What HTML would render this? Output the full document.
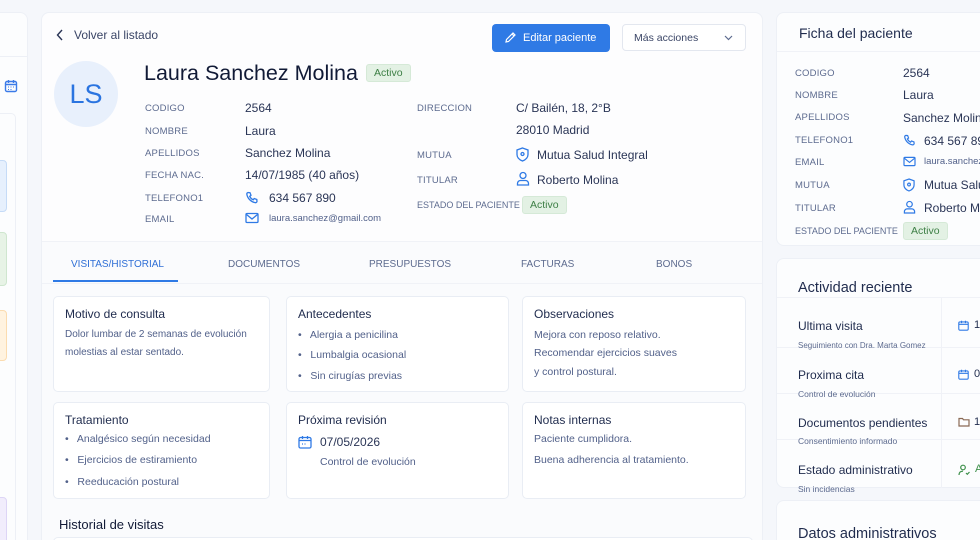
<!DOCTYPE html>
<html><head><meta charset="utf-8"><style>
*{box-sizing:border-box;margin:0;padding:0}
html,body{width:980px;height:540px;overflow:hidden}
body{background:#f5f7fb;font-family:"Liberation Sans",sans-serif;color:#1f2b4d}
#w{position:relative;width:980px;height:540px;overflow:hidden}
#w div{white-space:nowrap}
.abs{position:absolute}
.panel{position:absolute;background:#fcfdfe;border:1px solid #edf0f6;border-radius:8px}
.lbl{position:absolute;font-size:9.5px;color:#5d6b8f;letter-spacing:.2px}
.val{position:absolute;font-size:12px;color:#2a3556}
.badge{position:absolute;background:#e3f1e4;color:#3d7f45;font-size:10.5px;border-radius:3px;padding:2px 7px;border:1px solid #d5e9d7}
.card{position:absolute;background:#fff;border:1px solid #e9edf4;border-radius:5px}
.card h4{position:absolute;left:11px;top:10px;font-size:12px;font-weight:normal;color:#1f2b4d}
.card p{position:absolute;font-size:10.5px;color:#52618a;white-space:nowrap}
.tab{position:absolute;top:259px;font-size:10px;color:#5d6b8f}
svg{position:absolute}
</style></head><body><div id="w">
<div class="panel" style="left:-10px;top:12px;width:38px;height:540px"></div>
<div class="abs" style="left:0;top:56px;width:28px;height:1px;background:#edf0f6"></div>
<svg style="left:4px;top:79px" width="14" height="14" viewBox="0 0 14 14" fill="none" stroke="#3b7be8" stroke-width="1.4"><rect x="1.5" y="2.5" width="11" height="10" rx="1.5"/><path d="M1.5 5.5h11M4.5 1v3M9.5 1v3"/><path d="M4 8h1M6.5 8h1M9 8h1M4 10.5h1M6.5 10.5h1" stroke-width="1"/></svg>
<div class="abs" style="left:-6px;top:113px;width:22px;height:440px;border:1px solid #edf0f6;border-radius:5px;background:#fcfdfe"></div>
<div class="abs" style="left:-6px;top:160px;width:13px;height:52px;background:#e6f0fd;border:1px solid #c5dbf7;border-radius:4px"></div>
<div class="abs" style="left:-6px;top:232px;width:13px;height:54px;background:#e7f3e6;border:1px solid #cfe6cf;border-radius:4px"></div>
<div class="abs" style="left:-6px;top:310px;width:13px;height:51px;background:#fff3e0;border:1px solid #fbdcb0;border-radius:4px"></div>
<div class="abs" style="left:-6px;top:497px;width:13px;height:60px;background:#f1edfc;border:1px solid #ddd5f6;border-radius:4px"></div>

<div class="panel" style="left:41px;top:12px;width:722px;height:540px;background:#fafbfd"></div>
<div class="abs" style="left:42px;top:13px;width:720px;height:228px;background:#fdfdfe;border-radius:8px 8px 0 0"></div>
<div class="abs" style="left:42px;top:241px;width:720px;height:1px;background:#f0f2f7"></div>
<svg style="left:56px;top:29px" width="8" height="12" viewBox="0 0 8 12" fill="none" stroke="#2a3556" stroke-width="1.4"><path d="M6 1L1.5 6L6 11"/></svg>
<div class="abs" style="left:74px;top:28px;font-size:12px;color:#3a4566">Volver al listado</div>
<div class="abs" style="left:492px;top:24px;width:118px;height:28px;background:#2f7ae5;border-radius:4px;color:#fff;font-size:11px;line-height:28px;padding-left:31px">Editar paciente</div>
<svg style="left:504px;top:31px" width="13" height="13" viewBox="0 0 13 13" fill="none" stroke="#fff" stroke-width="1.2"><path d="M2 11l.5-2.5L9 2l2 2-6.5 6.5z M8 3l2 2"/></svg>
<div class="abs" style="left:622px;top:24px;width:124px;height:27px;background:#fff;border:1px solid #e3e7ef;border-radius:4px;font-size:10.5px;color:#3a4566;line-height:26px;padding-left:11px">Más acciones</div>
<svg style="left:724px;top:35px" width="9" height="6" viewBox="0 0 9 6" fill="none" stroke="#5d6b8f" stroke-width="1.2"><path d="M1 1l3.5 3.5L8 1"/></svg>

<div class="abs" style="left:54px;top:61px;width:64px;height:66px;border-radius:50%;background:#e8f0fc;color:#2a74e0;font-size:27px;text-align:center;line-height:66px">LS</div>
<div class="abs" style="left:144px;top:61px;font-size:21.5px;color:#111a36">Laura Sanchez Molina</div>
<div class="badge" style="left:366px;top:64px">Activo</div>

<div class="lbl" style="left:145px;top:103px">CODIGO</div><div class="val" style="left:245px;top:101px">2564</div>
<div class="lbl" style="left:145px;top:126px">NOMBRE</div><div class="val" style="left:245px;top:124px">Laura</div>
<div class="lbl" style="left:145px;top:148px">APELLIDOS</div><div class="val" style="left:245px;top:146px">Sanchez Molina</div>
<div class="lbl" style="left:145px;top:170px">FECHA NAC.</div><div class="val" style="left:245px;top:168px">14/07/1985 (40 años)</div>
<div class="lbl" style="left:145px;top:193px">TELEFONO1</div><div class="val" style="left:269px;top:191px">634 567 890</div>
<svg style="left:245px;top:191px" width="14" height="14" viewBox="0 0 14 14" fill="none" stroke="#2f7ae5" stroke-width="1.3"><path d="M3 1.5l2 .2 1 2.6-1.3 1a7 7 0 0 0 3.5 3.5l1-1.3 2.6 1 .2 2c-.2.7-.9 1.2-1.6 1.2A10.5 10.5 0 0 1 1.8 3.1C1.8 2.4 2.3 1.7 3 1.5z"/></svg>
<div class="lbl" style="left:145px;top:214px">EMAIL</div><div class="val" style="left:269px;top:213px;font-size:9.5px;color:#52618a">laura.sanchez@gmail.com</div>
<svg style="left:245px;top:212px" width="14" height="12" viewBox="0 0 14 12" fill="none" stroke="#2f7ae5" stroke-width="1.3"><rect x="1" y="1.5" width="12" height="9" rx="1"/><path d="M1.5 2.5L7 7l5.5-4.5"/></svg>

<div class="lbl" style="left:417px;top:103px">DIRECCION</div><div class="val" style="left:516px;top:101px">C/ Bailén, 18, 2°B</div>
<div class="val" style="left:516px;top:123px">28010 Madrid</div>
<div class="lbl" style="left:417px;top:150px">MUTUA</div><div class="val" style="left:537px;top:148px">Mutua Salud Integral</div>
<svg style="left:516px;top:147px" width="13" height="15" viewBox="0 0 13 15" fill="none" stroke="#2f7ae5" stroke-width="1.3"><path d="M6.5 1L12 3v4.5c0 3-2.5 5.3-5.5 6.5C3.5 12.8 1 10.5 1 7.5V3z"/><circle cx="6.5" cy="7" r="1.5"/></svg>
<div class="lbl" style="left:417px;top:175px">TITULAR</div><div class="val" style="left:537px;top:173px">Roberto Molina</div>
<svg style="left:516px;top:171px" width="14" height="15" viewBox="0 0 14 15" fill="none" stroke="#2f7ae5" stroke-width="1.3"><circle cx="7" cy="4.5" r="3"/><path d="M1.5 14v-1.5a3 3 0 0 1 3-3h5a3 3 0 0 1 3 3V14z"/></svg>
<div class="lbl" style="left:417px;top:200px;font-size:9px;letter-spacing:0">ESTADO DEL PACIENTE</div>
<div class="badge" style="left:522px;top:196px">Activo</div>

<div class="abs" style="left:42px;top:283px;width:720px;height:1px;background:#f0f2f7"></div>
<div class="tab" style="left:71px;color:#2f6fd6">VISITAS/HISTORIAL</div>
<div class="abs" style="left:53px;top:280px;width:125px;height:2px;background:#2f7ae5"></div>
<div class="tab" style="left:228px">DOCUMENTOS</div>
<div class="tab" style="left:369px">PRESUPUESTOS</div>
<div class="tab" style="left:521px">FACTURAS</div>
<div class="tab" style="left:656px">BONOS</div>

<div class="card" style="left:53px;top:296px;width:217px;height:96px"><h4>Motivo de consulta</h4><p style="left:11px;top:32px;font-size:10px">Dolor lumbar de 2 semanas de evolución</p><p style="left:11px;top:50px;font-size:10px">molestias al estar sentado.</p></div>
<div class="card" style="left:286px;top:296px;width:223px;height:96px"><h4>Antecedentes</h4><p style="left:11px;top:32px">•&nbsp;&nbsp; Alergia a penicilina</p><p style="left:11px;top:52px">•&nbsp;&nbsp; Lumbalgia ocasional</p><p style="left:11px;top:73px">•&nbsp;&nbsp; Sin cirugías previas</p></div>
<div class="card" style="left:522px;top:296px;width:224px;height:96px"><h4>Observaciones</h4><p style="left:11px;top:32px">Mejora con reposo relativo.</p><p style="left:11px;top:50px">Recomendar ejercicios suaves</p><p style="left:11px;top:69px">y control postural.</p></div>
<div class="card" style="left:53px;top:402px;width:217px;height:97px"><h4>Tratamiento</h4><p style="left:11px;top:30px">•&nbsp;&nbsp; Analgésico según necesidad</p><p style="left:11px;top:51px">•&nbsp;&nbsp; Ejercicios de estiramiento</p><p style="left:11px;top:73px">•&nbsp;&nbsp; Reeducación postural</p></div>
<div class="card" style="left:286px;top:402px;width:223px;height:97px"><h4>Próxima revisión</h4><p style="left:33px;top:32px;font-size:12px;color:#2a3556">07/05/2026</p><p style="left:33px;top:53px">Control de evolución</p></div>
<svg style="left:298px;top:435px" width="14" height="14" viewBox="0 0 14 14" fill="none" stroke="#2f7ae5" stroke-width="1.3"><rect x="1" y="2.5" width="12" height="10.5" rx="1.5"/><path d="M1 5.5h12M4.5 1v3M9.5 1v3M4 9h1M6.5 9h1"/></svg>
<div class="card" style="left:522px;top:402px;width:224px;height:97px"><h4>Notas internas</h4><p style="left:11px;top:30px">Paciente cumplidora.</p><p style="left:11px;top:51px">Buena adherencia al tratamiento.</p></div>
<div class="abs" style="left:59px;top:517px;font-size:13px;color:#111a36">Historial de visitas</div>
<div class="abs" style="left:53px;top:537px;width:700px;height:10px;border:1px solid #e9edf4;border-radius:5px;background:#fff"></div>

<div class="panel" style="left:776px;top:12px;width:230px;height:234px"></div>
<div class="abs" style="left:777px;top:51px;width:203px;height:1px;background:#f0f2f7"></div>
<div class="abs" style="left:799px;top:25px;font-size:14px;color:#1f2b4d">Ficha del paciente</div>
<div class="lbl" style="left:795px;top:68px">CODIGO</div><div class="val" style="left:903px;top:66px">2564</div>
<div class="lbl" style="left:795px;top:90px">NOMBRE</div><div class="val" style="left:903px;top:88px">Laura</div>
<div class="lbl" style="left:795px;top:112px">APELLIDOS</div><div class="val" style="left:903px;top:111px">Sanchez Molina</div>
<div class="lbl" style="left:795px;top:135px">TELEFONO1</div><div class="val" style="left:924px;top:134px">634 567 890</div>
<svg style="left:903px;top:134px" width="13" height="13" viewBox="0 0 14 14" fill="none" stroke="#2f7ae5" stroke-width="1.3"><path d="M3 1.5l2 .2 1 2.6-1.3 1a7 7 0 0 0 3.5 3.5l1-1.3 2.6 1 .2 2c-.2.7-.9 1.2-1.6 1.2A10.5 10.5 0 0 1 1.8 3.1C1.8 2.4 2.3 1.7 3 1.5z"/></svg>
<div class="lbl" style="left:795px;top:157px">EMAIL</div><div class="val" style="left:924px;top:156px;font-size:9.5px;color:#52618a">laura.sanchez@gmail.com</div>
<svg style="left:903px;top:156px" width="13" height="11" viewBox="0 0 14 12" fill="none" stroke="#2f7ae5" stroke-width="1.3"><rect x="1" y="1.5" width="12" height="9" rx="1"/><path d="M1.5 2.5L7 7l5.5-4.5"/></svg>
<div class="lbl" style="left:795px;top:180px">MUTUA</div><div class="val" style="left:924px;top:178px">Mutua Salud Integral</div>
<svg style="left:903px;top:178px" width="12" height="14" viewBox="0 0 13 15" fill="none" stroke="#2f7ae5" stroke-width="1.3"><path d="M6.5 1L12 3v4.5c0 3-2.5 5.3-5.5 6.5C3.5 12.8 1 10.5 1 7.5V3z"/><circle cx="6.5" cy="7" r="1.5"/></svg>
<div class="lbl" style="left:795px;top:203px">TITULAR</div><div class="val" style="left:924px;top:201px">Roberto Molina</div>
<svg style="left:903px;top:200px" width="13" height="14" viewBox="0 0 14 15" fill="none" stroke="#2f7ae5" stroke-width="1.3"><circle cx="7" cy="4.5" r="3"/><path d="M1.5 14v-1.5a3 3 0 0 1 3-3h5a3 3 0 0 1 3 3V14z"/></svg>
<div class="lbl" style="left:795px;top:226px;font-size:9px;letter-spacing:0">ESTADO DEL PACIENTE</div>
<div class="badge" style="left:903px;top:222px">Activo</div>

<div class="panel" style="left:776px;top:258px;width:230px;height:230px"></div>
<div class="abs" style="left:777px;top:297px;width:203px;height:1px;background:#f0f2f7"></div>
<div class="abs" style="left:798px;top:280px;font-size:14.5px;color:#1f2b4d">Actividad reciente</div>
<div class="abs" style="left:941px;top:298px;width:1px;height:190px;background:#f0f2f7"></div>
<div class="abs" style="left:777px;top:347px;width:203px;height:1px;background:#f0f2f7"></div>
<div class="abs" style="left:777px;top:393px;width:203px;height:1px;background:#f0f2f7"></div>
<div class="abs" style="left:777px;top:439px;width:203px;height:1px;background:#f0f2f7"></div>
<div class="abs" style="left:798px;top:319px;font-size:12px">Ultima visita</div><div class="abs" style="left:798px;top:341px;font-size:8px;color:#5d6b8f">Seguimiento con Dra. Marta Gomez</div>
<div class="abs" style="left:798px;top:368px;font-size:12px">Proxima cita</div><div class="abs" style="left:798px;top:389px;font-size:8.5px;color:#5d6b8f">Control de evolución</div>
<div class="abs" style="left:798px;top:416px;font-size:12px">Documentos pendientes</div><div class="abs" style="left:798px;top:436px;font-size:8.5px;color:#5d6b8f">Consentimiento informado</div>
<div class="abs" style="left:798px;top:463px;font-size:12px">Estado administrativo</div><div class="abs" style="left:798px;top:484px;font-size:8.5px;color:#5d6b8f">Sin incidencias</div>
<svg style="left:958px;top:320px" width="11" height="11" viewBox="0 0 14 14" fill="none" stroke="#2f7ae5" stroke-width="1.4"><rect x="1" y="2.5" width="12" height="10.5" rx="1.5"/><path d="M1 5.5h12M4.5 1v3M9.5 1v3"/></svg>
<div class="abs" style="left:974px;top:319px;font-size:11px">1</div>
<svg style="left:958px;top:369px" width="11" height="11" viewBox="0 0 14 14" fill="none" stroke="#2f7ae5" stroke-width="1.4"><rect x="1" y="2.5" width="12" height="10.5" rx="1.5"/><path d="M1 5.5h12M4.5 1v3M9.5 1v3"/></svg>
<div class="abs" style="left:974px;top:368px;font-size:11px">0</div>
<svg style="left:958px;top:417px" width="12" height="10" viewBox="0 0 12 10" fill="none" stroke="#8a6a55" stroke-width="1.2"><path d="M1 1.5h3.5l1 1.3H11V9H1z"/></svg>
<div class="abs" style="left:974px;top:416px;font-size:11px">1</div>
<svg style="left:958px;top:464px" width="12" height="12" viewBox="0 0 12 12" fill="none" stroke="#3d8f4a" stroke-width="1.2"><circle cx="5" cy="3.5" r="2.3"/><path d="M1 11c0-2.5 1.5-3.8 4-3.8M8 9l1.3 1.3L11.5 8"/></svg>
<div class="abs" style="left:975px;top:463px;font-size:11px;color:#3d8f4a">A</div>

<div class="panel" style="left:776px;top:500px;width:230px;height:60px"></div>
<div class="abs" style="left:798px;top:526px;font-size:14.5px;color:#1f2b4d">Datos administrativos</div>
</div></body></html>
